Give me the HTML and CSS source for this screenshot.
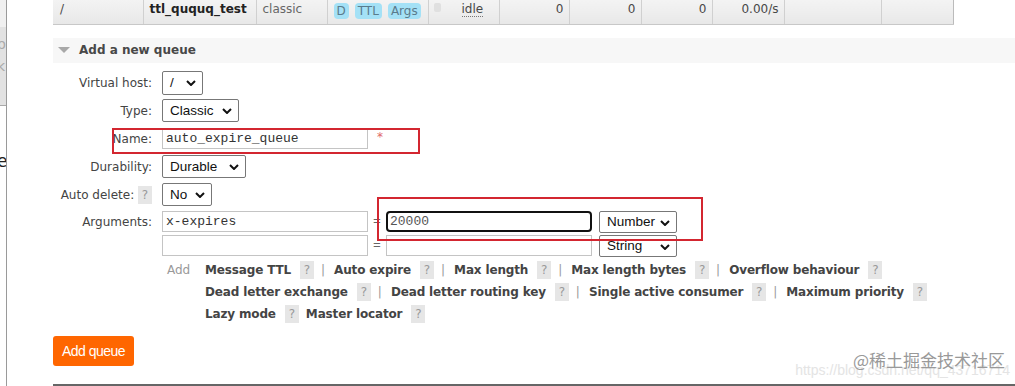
FILE: index.html
```html
<!DOCTYPE html>
<html lang="en">
<head>
  <meta charset="UTF-8" />
  <title>Queues</title>
  <link rel="stylesheet" href="styles.css">
</head>
<body>
  <div class="page">
    <div class="side">
      <div class="side-top"></div>
      <div class="side-grey"><span>p</span><span>k</span></div>
      <div class="side-e">e</div>
    </div>

    <main class="main">
      <table class="queues">
        <tr>
          <td class="c-vhost">/</td>
          <td class="c-name">ttl_ququq_test</td>
          <td class="c-type">classic</td>
          <td class="c-feat">
            <abbr class="feat">D</abbr><abbr class="feat">TTL</abbr><abbr class="feat">Args</abbr>
          </td>
          <td class="c-state"><span class="box"></span><span class="idle">idle</span></td>
          <td class="num c-n1">0</td>
          <td class="num c-n2">0</td>
          <td class="num c-n3">0</td>
          <td class="num c-rate">0.00/s</td>
          <td class="c-e1"></td>
          <td class="c-e2"></td>
        </tr>
      </table>

      <section class="section">
        <h2 class="section-title"><span class="tri"></span>Add a new queue</h2>

        <form class="queue-form">
          <div class="row">
            <label>Virtual host:</label>
            <div class="select sel-vhost">/<svg class="chev" viewBox="0 0 10 6"><path d="M1 1l4 4 4-4"/></svg></div>
          </div>
          <div class="row">
            <label>Type:</label>
            <div class="select sel-type">Classic<svg class="chev" viewBox="0 0 10 6"><path d="M1 1l4 4 4-4"/></svg></div>
          </div>
          <div class="row">
            <label>Name:</label>
            <div class="field-line">
              <input class="text" type="text" value="auto_expire_queue" />
              <span class="req">*</span>
            </div>
          </div>
          <div class="row">
            <label>Durability:</label>
            <div class="select sel-dur">Durable<svg class="chev" viewBox="0 0 10 6"><path d="M1 1l4 4 4-4"/></svg></div>
          </div>
          <div class="row">
            <label>Auto delete: <span class="help">?</span></label>
            <div class="select sel-auto">No<svg class="chev" viewBox="0 0 10 6"><path d="M1 1l4 4 4-4"/></svg></div>
          </div>
          <div class="row row-args">
            <label>Arguments:</label>
            <div class="args">
              <input class="text" type="text" value="x-expires" />
              <span class="eq">=</span>
              <input class="text focused" type="text" value="20000" />
              <div class="select sel-kind">Number<svg class="chev" viewBox="0 0 10 6"><path d="M1 1l4 4 4-4"/></svg></div>

              <input class="text" type="text" value="" />
              <span class="eq">=</span>
              <input class="text" type="text" value="" />
              <div class="select sel-kind">String<svg class="chev" viewBox="0 0 10 6"><path d="M1 1l4 4 4-4"/></svg></div>
            </div>
          </div>
          <div class="row row-add">
            <span></span>
            <div class="add-args">
              <span class="add-label">Add</span>
              <div class="arg-links">
                <div class="arg-line">
                  <a>Message TTL</a><span class="help">?</span><span class="sep">|</span>
                  <a>Auto expire</a><span class="help">?</span><span class="sep">|</span>
                  <a>Max length</a><span class="help">?</span><span class="sep">|</span>
                  <a>Max length bytes</a><span class="help">?</span><span class="sep">|</span>
                  <a>Overflow behaviour</a><span class="help">?</span>
                </div>
                <div class="arg-line">
                  <a>Dead letter exchange</a><span class="help">?</span><span class="sep">|</span>
                  <a>Dead letter routing key</a><span class="help">?</span><span class="sep">|</span>
                  <a>Single active consumer</a><span class="help">?</span><span class="sep">|</span>
                  <a>Maximum priority</a><span class="help">?</span>
                </div>
                <div class="arg-line">
                  <a>Lazy mode</a><span class="help">?</span>
                  <a>Master locator</a><span class="help">?</span>
                </div>
              </div>
            </div>
          </div>

          <button class="add-queue" type="button">Add queue</button>
        </form>
      </section>

      <div class="rule"></div>
    </main>

    <div class="mark-box mark-name"></div>
    <div class="mark-box mark-args"></div>

    <div class="watermark">
      <span class="wm-url">https://blog.csdn.net/qq_43716714</span>
      <span class="wm-text">@稀土掘金技术社区</span>
    </div>
  </div>
</body>
</html>
```

FILE: styles.css
```css
body {
  margin: 0;
  background-color: #fff;
  color: #484848;
  font: 12px "DejaVu Sans", Verdana, sans-serif;
}

.page {
  position: relative;
  display: flex;
  height: 386px;
  overflow: hidden;
}

/* window behind, on the left */
.side {
  flex: none;
  width: 6px;
  border-right: 1px solid #9a9a9a;
  overflow: hidden;
  color: #aaa;
  font: 14px "DejaVu Sans", sans-serif;
}

.side-top {
  height: 27px;
  background-color: #f0f0f0;
}

.side-grey {
  display: flex;
  flex-direction: column;
  height: 72px;
  padding-top: 6px;
  background-color: #e2e2e2;
  border-bottom: 1px solid #aaa;
  line-height: 22px;
}

.side-grey span,
.side-e {
  margin-left: -3px;
}

.side-e {
  margin-top: 45px;
  color: #222;
  font-size: 17px;
}

.main {
  flex: 1;
  padding-left: 46px;
}

/* queue table row */
.queues {
  width: 899px;
  border-collapse: collapse;
  table-layout: fixed;
}

.queues td {
  height: 24px;
  padding: 0 6px;
  vertical-align: top;
  line-height: 18px;
  border-right: 1px solid #d0d0d0;
  border-bottom: 1px solid #c8c8c8;
  background: linear-gradient(#f3f3f3, #e8e8e8);
  white-space: nowrap;
  box-sizing: border-box;
}

.queues td:last-child { border-right: 1px solid #bbb; }

.c-vhost { width: 90px; padding-left: 7px !important; }
.c-name { width: 113px; font-weight: bold; color: #222; }
.c-type { width: 71px; color: #666; }
.c-feat { width: 101px; padding-top: 2px !important; }
.c-state { width: 71px; }
.c-n1 { width: 70px; }
.c-n2 { width: 72px; }
.c-n3 { width: 71px; }
.c-rate { width: 72px; }
.c-e1 { width: 97px; }
.c-e2 { width: 72px; }

.num {
  text-align: right;
  padding-right: 5px !important;
}

.feat {
  display: inline-block;
  margin-right: 6px;
  padding: 0 3px;
  line-height: 16px;
  border-radius: 4px;
  background-color: #a4e1f6;
  color: #5a7b8c;
  text-decoration: none;
}

.feat:last-child { margin-right: 0; }

.box {
  display: inline-block;
  width: 7px;
  height: 9px;
  margin: 3px 21px 0 -1px;
  vertical-align: top;
  background-color: #e0e0e0;
  border-radius: 2px;
}

.idle {
  border-bottom: 1px dotted #777;
  line-height: 14px;
}

/* add a new queue */
.section {
  margin-top: 13px;
}

.section-title {
  display: flex;
  align-items: center;
  height: 25px;
  margin: 0;
  padding-left: 5px;
  background-color: #f7f7f7;
  font-size: 12px;
  color: #484848;
}

.tri {
  width: 0;
  height: 0;
  margin-right: 9px;
  border-left: 6px solid transparent;
  border-right: 6px solid transparent;
  border-top: 6px solid #a8a8a8;
}

.queue-form {
  padding-top: 6px;
}

.row {
  display: grid;
  grid-template-columns: 99px auto;
  column-gap: 10px;
  align-items: center;
  height: 28px;
}

.row label {
  text-align: right;
  color: #444;
}

.select {
  position: relative;
  display: flex;
  align-items: center;
  box-sizing: border-box;
  height: 23px;
  padding-left: 7px;
  border: 1px solid #777;
  border-radius: 2px;
  background-color: #fff;
  color: #111;
  font: 13.5px "Liberation Sans", Arial, sans-serif;
}

.chev {
  position: absolute;
  right: 6px;
  top: 8px;
  width: 10px;
  height: 6px;
  fill: none;
  stroke: #111;
  stroke-width: 2;
}

.sel-vhost { width: 41px; height: 24px; }
.sel-type { width: 77px; }
.sel-dur { width: 84px; }
.sel-auto { width: 50px; }
.sel-kind { width: 78px; height: 22px; }

.field-line {
  display: flex;
  align-items: flex-start;
}

.text {
  box-sizing: border-box;
  width: 206px;
  height: 21px;
  margin: 0;
  padding: 0 3px;
  border: 1px solid #c4c4c4;
  border-radius: 0;
  background-color: #fff;
  color: #333;
  font: 13px "Liberation Mono", "Courier New", monospace;
  outline: none;
}

.text.focused {
  padding-left: 2px;
  border: 2px solid #111;
  border-radius: 4px;
  color: #555;
}

.req {
  margin: 2px 0 0 9px;
  color: #e06666;
  font-size: 12px;
}

.help {
  display: inline-block;
  width: 14px;
  line-height: 18px;
  text-align: center;
  background-color: #e6e6e6;
  color: #999;
  font-weight: normal;
}

.row-args {
  align-items: start;
  height: auto;
  margin-top: 1px;
}

.row-args label {
  line-height: 24px;
}

.args {
  display: grid;
  grid-template-columns: 206px 18px 206px 78px;
  grid-auto-rows: 24px;
  column-gap: 0;
  align-items: center;
}

.args .select {
  margin-left: 7px;
}

.eq {
  text-align: center;
  color: #666;
  font-family: "Liberation Mono", monospace;
  font-size: 13px;
}

.row-add {
  align-items: start;
  height: auto;
  margin-top: 1px;
}

.add-args {
  display: flex;
  padding-left: 5px;
}

.add-label {
  width: 38px;
  flex: none;
  line-height: 22px;
  color: #999;
}

.arg-line {
  display: flex;
  align-items: center;
  height: 22px;
  white-space: nowrap;
}

.arg-line a {
  font-weight: bold;
  color: #444;
  margin-right: 9px;
  letter-spacing: -0.15px;
}

.sep {
  margin: 0 9px 0 7px;
  color: #999;
}

.arg-line .help + a {
  margin-left: 7px;
}

.sep + a {
  margin-left: 0 !important;
}

.add-queue {
  display: block;
  width: 81px;
  height: 30px;
  margin-top: 11px;
  padding: 0;
  border: none;
  border-radius: 3px;
  background-color: #ff6600;
  color: #fff;
  font: 14px "Liberation Sans", Arial, sans-serif;
  letter-spacing: -0.5px;
}

.rule {
  margin-top: 18px;
  border-top: 2px solid #666;
}

/* annotation boxes drawn over the screenshot */
.mark-box {
  position: absolute;
  border: 2px solid #d32630;
  box-sizing: border-box;
}

.mark-name {
  left: 112px;
  top: 128px;
  width: 308px;
  height: 26px;
}

.mark-args {
  left: 377px;
  top: 197px;
  width: 326px;
  height: 44px;
}

.watermark {
  position: absolute;
  left: 795px;
  top: 350px;
  width: 215px;
  height: 30px;
}

.wm-url {
  position: absolute;
  right: 0;
  top: 12px;
  color: #e4e4e4;
  font: 14px "Liberation Sans", sans-serif;
  white-space: nowrap;
}

.wm-text {
  position: absolute;
  right: 5px;
  top: 0;
  color: #999;
  font: 17px/20px "Noto Sans CJK SC", sans-serif;
  white-space: nowrap;
}
```
